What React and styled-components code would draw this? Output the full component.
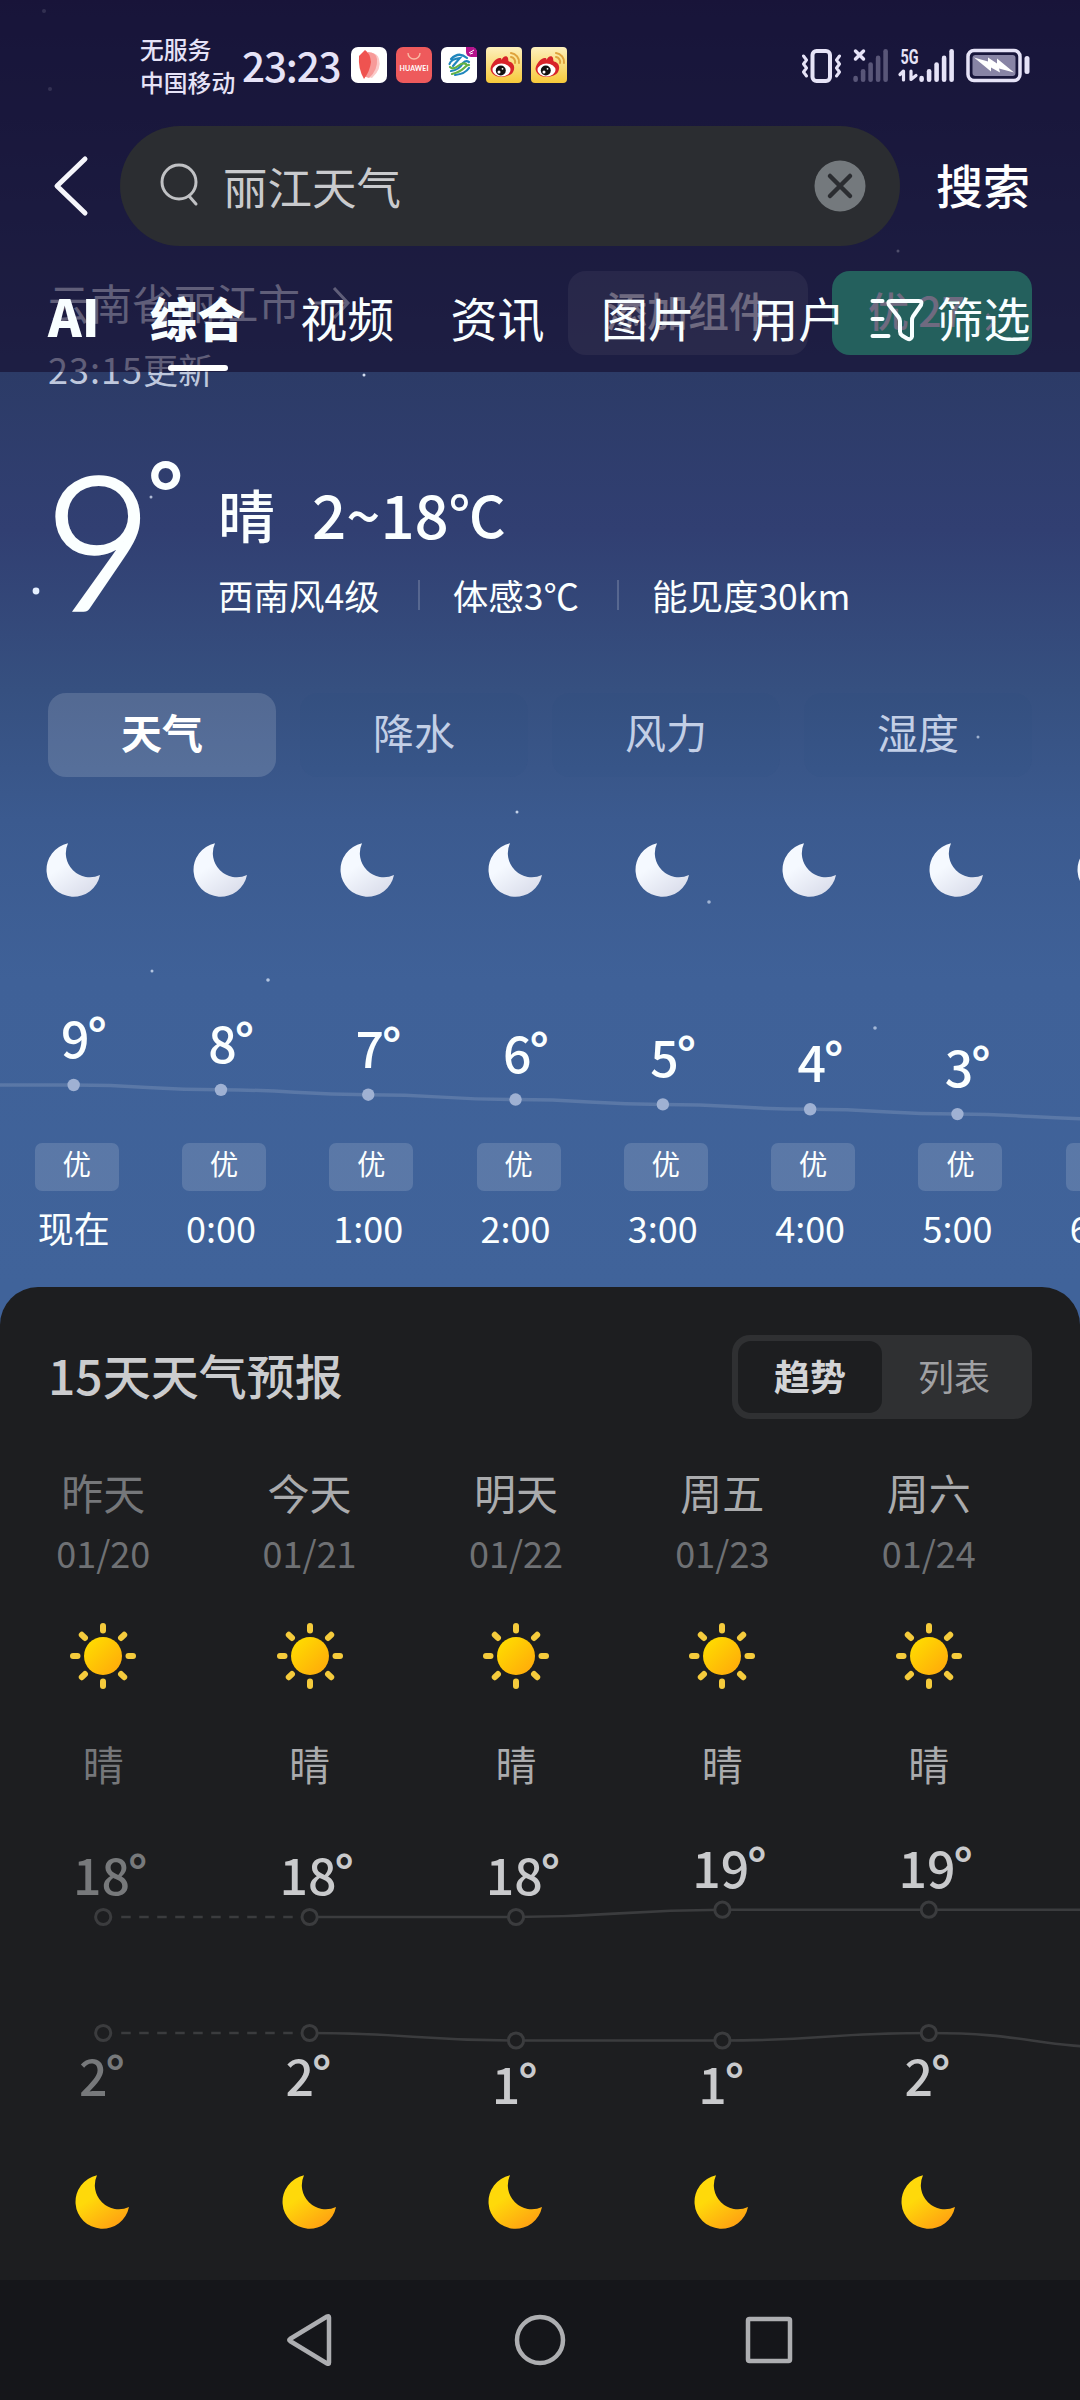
import React from 'react'
import styled, { createGlobalStyle } from 'styled-components';

const GlobalStyle = createGlobalStyle`
* {
    box-sizing: border-box;
}
body {
    margin: 0;
    background: #1e1f21;
    font-family: "Noto Sans CJK SC", "Noto Sans", sans-serif;
}
svg {
    display: block;
    flex: none;
}
`;

const HOUR_WIDTH = 147.3;
const DAY_WIDTH = 206.4;

const hours = [
    { time: '现在', temp: 9 },
    { time: '0:00', temp: 8 },
    { time: '1:00', temp: 7 },
    { time: '2:00', temp: 6 },
    { time: '3:00', temp: 5 },
    { time: '4:00', temp: 4 },
    { time: '5:00', temp: 3 },
    { time: '6:00', temp: 2 },
];

const days = [
    { name: '昨天', date: '01/20', high: 18, low: 2, past: true },
    { name: '今天', date: '01/21', high: 18, low: 2 },
    { name: '明天', date: '01/22', high: 18, low: 1 },
    { name: '周五', date: '01/23', high: 19, low: 1 },
    { name: '周六', date: '01/24', high: 19, low: 2 },
];

const stars = [
    [44, 11, 2, 0.3], [50, 89, 2, 0.3], [364, 142, 1.5, 0.3], [898, 251, 1.5, 0.6],
    [364, 375, 1.5, 0.9], [36, 591, 3.4, 1], [151, 497, 1.5, 0.7], [978, 737, 1.5, 0.6],
    [517, 812, 1.5, 0.8], [709, 902, 1.8, 0.6], [152, 971, 1.5, 0.7], [268, 980, 1.8, 0.7],
    [875, 1028, 1.8, 0.6],
];

// smooth line with a flat tangent on every point
const curve = (points) => points.map(([x, y], i) => {
    if (i === 0) return `M${x} ${y}`;
    const [px, py] = points[i - 1];
    const mid = (px + x) / 2;
    return `C${mid} ${py} ${mid} ${y} ${x} ${y}`;
}).join(' ');

function Moon({ from, to, id }) {
    return (
        <svg width="56" height="54" viewBox="0 0 56 54">
            <defs>
                <linearGradient id={id} x1="0.2" y1="0.1" x2="0.8" y2="1">
                    <stop offset="0.3" stopColor={from} />
                    <stop offset="1" stopColor={to} />
                </linearGradient>
            </defs>
            <path d="M22 .3A27 27 0 1 0 54 32A24 24 0 0 1 22 .3Z" fill={`url(#${id})`} />
        </svg>
    )
}

function Sun() {
    return (
        <svg width="68" height="68" viewBox="-34 -34 68 68">
            <defs>
                <linearGradient id="sun" x1="0.1" y1="0.1" x2="0.9" y2="0.9">
                    <stop offset="0" stopColor="#ffdc00" />
                    <stop offset="1" stopColor="#ffab0a" />
                </linearGradient>
            </defs>
            <circle r="19" fill="url(#sun)" />
            {[0, 45, 90, 135, 180, 225, 270, 315].map((a) => (
                <line key={a} y1="-30" y2="-25.5" stroke="#f5cb3c" strokeWidth="6" strokeLinecap="round" transform={`rotate(${a})`} />
            ))}
        </svg>
    )
}

function Weibo() {
    return (
        <svg width="36" height="36" viewBox="0 0 36 36">
            <defs>
                <linearGradient id="weibo" x1="0" y1="0" x2="0" y2="1">
                    <stop offset="0" stopColor="#fdf0bd" />
                    <stop offset="1" stopColor="#f7c93a" />
                </linearGradient>
            </defs>
            <rect width="36" height="36" rx="4" fill="url(#weibo)" />
            <path d="M25 10a5 5 0 0 1 4 6M25 6a9 9 0 0 1 8 10" fill="none" stroke="#dfa23c" strokeWidth="2" strokeLinecap="round" />
            <path d="M4.500 22C5 16 11 10 14.500 11c1 .3 1 1.500 1 2C17 9 21 8 22 11c.5 2 0 3 1 3.500c5 1 6.500 6 4 10.500C24 31 6 33 4.500 22Z" fill="#d8232a" />
            <ellipse cx="15.500" cy="23" rx="9" ry="6.500" fill="#fff" />
            <circle cx="14.800" cy="23.500" r="5" fill="#111" />
            <circle cx="13" cy="25" r="1.500" fill="#fff" />
            <circle cx="16.500" cy="21.800" r="0.900" fill="#fff" />
        </svg>
    )
}

function Bars({ color }) {
    return (
        <g stroke={color} strokeWidth="4.600" strokeLinecap="round">
            {[0, 1, 2, 3, 4].map((i) => (
                <line key={i} x1={2.6 + i * 7.5} x2={2.6 + i * 7.5} y1={29 - i * 6.7} y2="30.700" />
            ))}
        </g>
    )
}

function StatusBar() {
    return (
        <Status>
            <Carrier>
                <span>无服务</span>
                <span>中国移动</span>
            </Carrier>
            <Clock>23:23</Clock>
            <AppIcons>
                <svg width="36" height="36" viewBox="0 0 36 36">
                    <rect width="36" height="36" rx="7" fill="#fff" />
                    <path d="M19 6q8 0 9 6q3 10-7 19l-7-2Z" fill="#fbc9c8" />
                    <path d="M17 5q8 0 9 7q1 11-8 19l-6-2Z" fill="#f79a99" />
                    <path d="M8 9q2-2 6-6q5 3 6 12q-1 9-7 17Q7 22 8 9Z" fill="#ef5350" />
                </svg>
                <svg width="36" height="36" viewBox="0 0 36 36">
                    <rect width="36" height="36" rx="7" fill="#ee5a5c" />
                    <path d="M12 6a6 6 0 0 0 12 0" fill="none" stroke="#f9b9a4" strokeWidth="1.400" />
                    <text x="18" y="24" textAnchor="middle" fontFamily="Lato, sans-serif" fontWeight="700" fontSize="7" textLength="29" fill="#fff">HUAWEI</text>
                </svg>
                <svg width="36" height="36" viewBox="0 0 36 36">
                    <rect width="36" height="36" rx="6" fill="#fff" />
                    <g fill="none" strokeWidth="2.200" strokeLinecap="round">
                        <path d="M10 12Q18 4 26 11M8.500 17Q10 12 19 11L12 19M10 24Q18 23 22 16Q25 13 28 15M14 28Q24 27 28 21" stroke="#1f86bd" />
                        <path d="M9 20q3 3 8-1t8-2M11 27q8-2 12-6t5-3" stroke="#63b245" />
                    </g>
                    <path d="M25 0h6a5 5 0 0 1 5 5v5h-6a5 5 0 0 1-5-5Z" fill="#b5128c" />
                    <path d="M28 6l5-3M29 7l3-1" stroke="#fff" strokeWidth="1" />
                </svg>
                <Weibo />
                <Weibo />
            </AppIcons>
            <SystemIcons width="230" height="36" viewBox="0 0 230 36" fill="none">
                <g stroke="#e6e3f7" strokeLinecap="round" strokeLinejoin="round">
                    <rect x="10.500" y="4" width="17.500" height="30" rx="4" strokeWidth="4" />
                    <path d="M1.500 9l3 4-3 4 3 4-3 4 3 4M37.500 9l-3 4 3 4-3 4 3 4-3 4" strokeWidth="3" />
                    <path d="M53.500 4l8 8m0-8l-8 8" strokeWidth="3.500" />
                    <path d="M101.500 33v-9l-3.500 3.500M109 24v8.500l5-4" strokeWidth="3.200" />
                </g>
                <g transform="translate(51 2)"><Bars color="#595678" /></g>
                <g transform="translate(117 2)"><Bars color="#e6e3f7" /></g>
                <text x="98.500" y="16.500" fontFamily="Roboto, sans-serif" fontWeight="700" fontSize="20" textLength="18" lengthAdjust="spacingAndGlyphs" fill="#e6e3f7">5G</text>
                <rect x="166" y="3.500" width="52" height="30" rx="6" stroke="#e6e3f7" strokeWidth="3.500" />
                <rect x="170.500" y="8" width="43" height="21" rx="3" fill="#8884a5" />
                <path d="M172 10.500l14 4v-4l9 6v-5l17 14-15-4 1 4-9-5v4Z" fill="#fff" />
                <rect x="222.500" y="9" width="5" height="18" rx="2.500" fill="#e6e3f7" />
            </SystemIcons>
        </Status>
    )
}

function SearchHeader() {
    return (
        <Header>
            <StatusBar />
            <SearchRow>
                <svg width="36" height="62" viewBox="0 0 36 62">
                    <path d="M32 4L4 31L32 58" fill="none" stroke="#f6f6fb" strokeWidth="5" strokeLinecap="round" strokeLinejoin="round" />
                </svg>
                <SearchBox>
                    <svg width="42" height="48" viewBox="0 0 42 48">
                        <circle cx="20" cy="20" r="17" fill="none" stroke="#c0c1c4" strokeWidth="3" />
                        <path d="M30 34l7 8" stroke="#c0c1c4" strokeWidth="3" strokeLinecap="round" />
                    </svg>
                    <Query>丽江天气</Query>
                    <svg width="52" height="52" viewBox="0 0 52 52">
                        <circle cx="26" cy="26" r="25.500" fill="#74797d" />
                        <path d="M16 16l20 20M36 16l-20 20" stroke="#2b2d31" strokeWidth="4.500" strokeLinecap="round" />
                    </svg>
                </SearchBox>
                <SearchButton>搜索</SearchButton>
            </SearchRow>
            <TabBar>
                <AiTab>AI</AiTab>
                <Tab $active>综合</Tab>
                <Tab>视频</Tab>
                <Tab>资讯</Tab>
                <Tab>图片</Tab>
                <Tab>用户</Tab>
                <Filter>
                    <svg width="54" height="46" viewBox="0 0 54 46" fill="none" stroke="#f8feff" strokeWidth="4" strokeLinecap="round" strokeLinejoin="round">
                        <path d="M2.500 4h10M2.500 22h10M2.500 39h16" />
                        <path d="M21 4h28q3.500 0 2 4L43 19.500q-1 1.500-1 4v16q-1 4-5 2l-5-3q-2-1.500-2-4V24q0-2-1.500-4L19 8q-2-4 2-4Z" />
                    </svg>
                    <span>筛选</span>
                </Filter>
            </TabBar>
        </Header>
    )
}

function Hourly() {
    const dots = hours.map((h, i) => [(i + 0.5) * HOUR_WIDTH, 92 + (9 - h.temp) * 4.85]);
    return (
        <>
            <HourRow>
                {hours.map((h, i) => (
                    <HourCell key={h.time}><Moon id={`night-${i}`} from="#f5f9ff" to="#d9dcea" /></HourCell>
                ))}
            </HourRow>
            <HourChart>
                <HourRow>
                    {hours.map((h) => (
                        <HourTemp key={h.time} $drop={(9 - h.temp) * 4.85}>{h.temp}<Degree>°</Degree></HourTemp>
                    ))}
                </HourRow>
                <ChartLines width="1180" height="150" fill="none">
                    <path d={curve([[-74, 92], ...dots])} stroke="#fff" strokeOpacity="0.14" strokeWidth="3.500" />
                    {dots.map(([x, y]) => <circle key={x} cx={x} cy={y} r="6.200" fill="#9fb1d3" />)}
                </ChartLines>
            </HourChart>
            <HourRow>
                {hours.map((h) => (
                    <HourCell key={h.time}>
                        <AirTag>优</AirTag>
                        <HourTime>{h.time}</HourTime>
                    </HourCell>
                ))}
            </HourRow>
        </>
    )
}

function Trend() {
    const highs = days.map((d, i) => [(i + 0.5) * DAY_WIDTH, 67 + (18 - d.high) * 7.3]);
    const lows = days.map((d, i) => [(i + 0.5) * DAY_WIDTH, 183 + (2 - d.low) * 7.5]);
    const line = { stroke: '#3b3c3e', strokeWidth: 2.6, fill: 'none' };
    return (
        <TrendChart>
            <TrendLines width="1080" height="260">
                {[[...highs, [1135, 59.7]], [...lows, [1135, 198]]].map((points, i) => (
                    <g key={i}>
                        <path d={`M${points[0][0] + 18} ${points[0][1]}H${points[1][0] - 15}`} {...line} strokeDasharray="9.500 8.500" />
                        <path d={curve(points.slice(1))} {...line} />
                        {points.map(([x, y]) => <circle key={x} cx={x} cy={y} r="7.600" {...line} strokeWidth="3" fill="#1d1e20" />)}
                    </g>
                ))}
            </TrendLines>
            <DayRow>
                {days.map((d) => (
                    <TrendCell key={d.date} $past={d.past}>
                        <HighTemp $drop={(19 - d.high) * 7.3}>{d.high}<Degree>°</Degree></HighTemp>
                        <LowTemp $drop={(2 - d.low) * 7.5}>{d.low}<Degree>°</Degree></LowTemp>
                    </TrendCell>
                ))}
            </DayRow>
        </TrendChart>
    )
}

function App() {
    return (
        <>
            <GlobalStyle />
            <Phone>
                <StarField width="1080" height="1287">
                    {stars.map(([x, y, r, o]) => <circle key={`${x}-${y}`} cx={x} cy={y} r={r} fill="#e6f0ff" opacity={o} />)}
                </StarField>
                <SearchHeader />

                <Sky>
                    <PlaceRow>
                        <Place>
                            <PlaceName>
                                云南省丽江市
                                <svg width="46" height="36" viewBox="0 0 46 36" fill="none" stroke="currentColor" strokeWidth="3">
                                    <path d="M3 19h39M28 4l14 15-14 15" />
                                </svg>
                            </PlaceName>
                            <Updated>23:15<span>更新</span></Updated>
                        </Place>
                        <AddWidget>添加组件</AddWidget>
                        <AirBadge>
                            优 27
                            <svg width="10" height="18" viewBox="0 0 10 18" fill="none" stroke="currentColor" strokeWidth="3">
                                <path d="M1 1l7 8-7 8" />
                            </svg>
                        </AirBadge>
                    </PlaceRow>

                    <Current>
                        <BigTemp>9<BigDegree>°</BigDegree></BigTemp>
                        <div>
                            <Summary>晴<Range>2~18<span>℃</span></Range></Summary>
                            <Facts>
                                <span>西南风4级</span>
                                <Divider />
                                <span>体感3℃</span>
                                <Divider />
                                <span>能见度30km</span>
                            </Facts>
                        </div>
                    </Current>

                    <Metrics>
                        <Metric $active>天气</Metric>
                        <Metric>降水</Metric>
                        <Metric>风力</Metric>
                        <Metric>湿度</Metric>
                    </Metrics>

                    <Hourly />
                </Sky>

                <Forecast>
                    <ForecastHead>
                        <Title>15天天气预报</Title>
                        <Toggle>
                            <ToggleItem $active>趋势</ToggleItem>
                            <ToggleItem>列表</ToggleItem>
                        </Toggle>
                    </ForecastHead>
                    <DayRow>
                        {days.map((d) => (
                            <Day key={d.date} $past={d.past}>
                                <DayName>{d.name}</DayName>
                                <DayDate>{d.date}</DayDate>
                                <Sun />
                                <Condition>晴</Condition>
                            </Day>
                        ))}
                    </DayRow>
                    <Trend />
                    <DayRow>
                        {days.map((d, i) => (
                            <Day key={d.date}><Moon id={`gold-${i}`} from="#ffd90a" to="#ff9d12" /></Day>
                        ))}
                    </DayRow>
                </Forecast>

                <NavBar>
                    <svg width="50" height="56" viewBox="0 0 50 56">
                        <path d="M44 5.500v45q0 2-2 1L5 29q-1.500-1 0-2L42 4.500q2-1 2 1Z" />
                    </svg>
                    <svg width="56" height="56" viewBox="0 0 56 56"><circle cx="28" cy="28" r="23" /></svg>
                    <svg width="50" height="56" viewBox="0 0 50 56"><rect x="3" y="7" width="42" height="42" rx="1.500" /></svg>
                </NavBar>
            </Phone>
        </>
    )
}

export default App;

const Phone = styled.div`
position: relative;
width: 1080px;
height: 2400px;
overflow: hidden;
display: flex;
flex-direction: column;
background: linear-gradient(#1f2551 0, #2c3b67 372px, #313f72 530px, #365080 690px, #3b5a8f 820px, #3f6198 980px, #40639a 1287px, #40639a 100%);
`;

const StarField = styled.svg`
position: absolute;
top: 0;
left: 0;
`;

const Header = styled.header`
position: absolute;
top: 0;
left: 0;
width: 100%;
height: 372px;
z-index: 2;
display: flex;
flex-direction: column;
background: rgba(18, 8, 39, 0.55);
`;

const Status = styled.div`
height: 126px;
display: flex;
align-items: flex-start;
padding: 31px 48px 0 140px;
color: #e6e3f7;
`;

const Carrier = styled.div`
display: flex;
flex-direction: column;
width: 102px;
padding-top: 1px;
font-size: 23.8px;
line-height: 33px;
font-weight: 500;
white-space: nowrap;
`;

const Clock = styled.div`
width: 109px;
font-size: 40.5px;
line-height: 68px;
font-weight: 500;
letter-spacing: -1.2px;
`;

const AppIcons = styled.div`
display: flex;
gap: 9px;
padding-top: 16px;
`;

const SystemIcons = styled.svg`
margin: 16px 0 0 auto;
`;

const SearchRow = styled.div`
height: 120px;
display: flex;
align-items: center;
padding-left: 53px;
`;

const SearchBox = styled.div`
flex: none;
width: 780px;
height: 120px;
margin: 0 36px 0 31px;
padding: 0 34px 0 39px;
border-radius: 60px;
background: #2b2d31;
display: flex;
align-items: center;
`;

const Query = styled.div`
flex: 1;
margin: -1px 0 0 22px;
font-size: 44.5px;
line-height: 60px;
color: #c9cacd;
`;

const SearchButton = styled.div`
margin-top: -4px;
font-size: 47px;
line-height: 60px;
font-weight: 500;
color: #fff;
`;

const TabBar = styled.nav`
display: flex;
flex: 1;
padding: 41px 0 0 48px;
color: #f8feff;
font-size: 47px;
line-height: 60px;
`;

const AiTab = styled.div`
width: 102px;
font-size: 51px;
line-height: 56px;
font-weight: 900;
`;

const Tab = styled.div`
width: 150.3px;
font-weight: ${(p) => (p.$active ? 900 : 400)};
&::after {
    content: "";
    display: ${(p) => (p.$active ? 'block' : 'none')};
    width: 60px;
    height: 6px;
    margin: 18px 0 0 18px;
    border-radius: 3px;
    background: #fff;
}
`;

const Filter = styled.div`
display: flex;
margin-left: -31px;
svg {
    margin: 10px 15px 0 0;
}
span {
    margin-left: -3px;
}
`;

const Sky = styled.section`
height: 1287px;
padding-top: 271px;
color: #fbffff;
`;

const PlaceRow = styled.div`
display: flex;
align-items: flex-start;
height: 169px;
padding: 0 48px;
`;

const Place = styled.div`
flex: 1;
color: #bfc8dd;
`;

const PlaceName = styled.div`
display: flex;
align-items: center;
gap: 6px;
font-size: 42px;
line-height: 62px;
`;

const Updated = styled.div`
margin-top: 9px;
font-size: 36px;
line-height: 52px;
letter-spacing: 1px;
span {
    font-size: 35px;
    letter-spacing: 0;
}
`;

const Chip = styled.div`
height: 84px;
border-radius: 18px;
line-height: 76px;
font-size: 41px;
font-weight: 500;
text-align: center;
color: #dfe2ee;
`;

const AddWidget = styled(Chip)`
width: 240px;
background: rgba(255, 255, 255, 0.13);
`;

const AirBadge = styled(Chip)`
display: flex;
justify-content: center;
width: 200px;
margin-left: 24px;
background: #3acda0;
svg {
    margin: 42px 0 0 21px;
}
`;

const Current = styled.div`
display: flex;
height: 253px;
padding-left: 45px;
`;

const BigTemp = styled.div`
width: 173px;
display: flex;
font-family: Lato, "Noto Sans CJK SC", sans-serif;
font-size: 185px;
line-height: 196px;
font-weight: 300;
-webkit-text-stroke: 3.5px #fbffff;
`;

const BigDegree = styled.span`
margin-left: -4px;
font-size: 84px;
line-height: 102px;
font-weight: 700;
-webkit-text-stroke: 0;
`;

const Summary = styled.div`
display: flex;
padding-top: 33px;
font-size: 57px;
line-height: 80px;
font-weight: 500;
`;

const Range = styled.div`
display: flex;
margin-left: 37px;
font-size: 60px;
span {
    font-size: 57px;
}
`;

const Facts = styled.div`
display: flex;
align-items: center;
margin-top: 17px;
font-size: 35.5px;
line-height: 50px;
`;

const Divider = styled.i`
width: 2px;
height: 30px;
margin: 0 33px 0 38px;
background: rgba(255, 255, 255, 0.18);
`;

const Metrics = styled.div`
display: flex;
gap: 24px;
padding: 0 48px;
height: 150px;
`;

const Metric = styled.div`
width: 228px;
height: 84px;
border-radius: 18px;
text-align: center;
font-size: 41px;
line-height: 76px;
font-weight: ${(p) => (p.$active ? 700 : 400)};
color: ${(p) => (p.$active ? '#fff' : '#c3cfe6')};
background: ${(p) => (p.$active ? 'rgba(255, 255, 255, 0.15)' : 'rgba(40, 80, 130, 0.08)')};
`;

const HourRow = styled.div`
display: flex;
width: max-content;
`;

const HourCell = styled.div`
width: ${HOUR_WIDTH}px;
display: flex;
flex-direction: column;
align-items: center;
`;

const HourChart = styled.div`
position: relative;
height: 246px;
padding-top: 103px;
`;

const ChartLines = styled.svg`
position: absolute;
left: 0;
bottom: 0;
`;

const TrendLines = styled(ChartLines)`
bottom: 65px;
`;

const HourTemp = styled.div`
width: ${HOUR_WIDTH}px;
padding: ${(p) => p.$drop}px 0 0 61px;
display: flex;
font-size: 50px;
line-height: 72px;
font-weight: 500;
`;

const Degree = styled.span`
margin: -3px 0 0 -2px;
font-size: 48px;
font-weight: 700;
`;

const AirTag = styled.div`
width: 84px;
height: 48px;
margin-left: 6px;
border-radius: 7px;
background: rgba(255, 255, 255, 0.14);
text-align: center;
font-size: 28.5px;
line-height: 40px;
`;

const HourTime = styled.div`
margin-top: 9px;
font-size: 36px;
line-height: 54px;
`;

const Forecast = styled.section`
height: 993px;
padding-top: 48px;
border-radius: 38px 38px 0 0;
background: #1d1e20;
`;

const ForecastHead = styled.div`
display: flex;
justify-content: space-between;
align-items: center;
height: 84px;
padding: 0 48px;
`;

const Title = styled.h2`
margin: -6px 0 0;
font-size: 48px;
line-height: 64px;
font-weight: 500;
color: #cbccce;
`;

const Toggle = styled.div`
display: flex;
width: 300px;
height: 84px;
padding: 6px;
border-radius: 18px;
background: #2f3032;
`;

const ToggleItem = styled.div`
width: 144px;
border-radius: 13px;
text-align: center;
font-size: 36px;
line-height: 69px;
font-weight: ${(p) => (p.$active ? 700 : 400)};
color: ${(p) => (p.$active ? '#d3d4d6' : '#a0a1a4')};
background: ${(p) => (p.$active ? '#1d1e20' : 'transparent')};
`;

const DayRow = styled.div`
display: flex;
`;

const Day = styled.div`
width: ${DAY_WIDTH}px;
display: flex;
flex-direction: column;
align-items: center;
color: ${(p) => (p.$past ? '#75777a' : '#aaabad')};
`;

const DayName = styled.div`
margin-top: 43px;
font-size: 42px;
line-height: 60px;
`;

const DayDate = styled.div`
margin: 5px 0 45px;
font-size: 36px;
line-height: 50px;
color: #6f7174;
`;

const Condition = styled.div`
margin: 43px 0 0;
font-size: 41px;
line-height: 60px;
`;

const TrendChart = styled.div`
position: relative;
height: 382px;
padding-top: 43px;
`;

const TrendCell = styled.div`
width: ${DAY_WIDTH}px;
height: 300px;
font-size: 50px;
line-height: 60px;
font-weight: 500;
color: ${(p) => (p.$past ? '#77797b' : '#c9cacc')};
`;

const HighTemp = styled.div`
display: flex;
height: 208px;
padding: ${(p) => p.$drop}px 0 0 73px;
`;

const LowTemp = styled.div`
display: flex;
padding: ${(p) => p.$drop}px 0 0 79px;
`;

const NavBar = styled.footer`
height: 120px;
display: flex;
justify-content: center;
align-items: center;
gap: 177px;
background: #15161a;
fill: none;
stroke: #adaeb1;
stroke-width: 4.5px;
`;
